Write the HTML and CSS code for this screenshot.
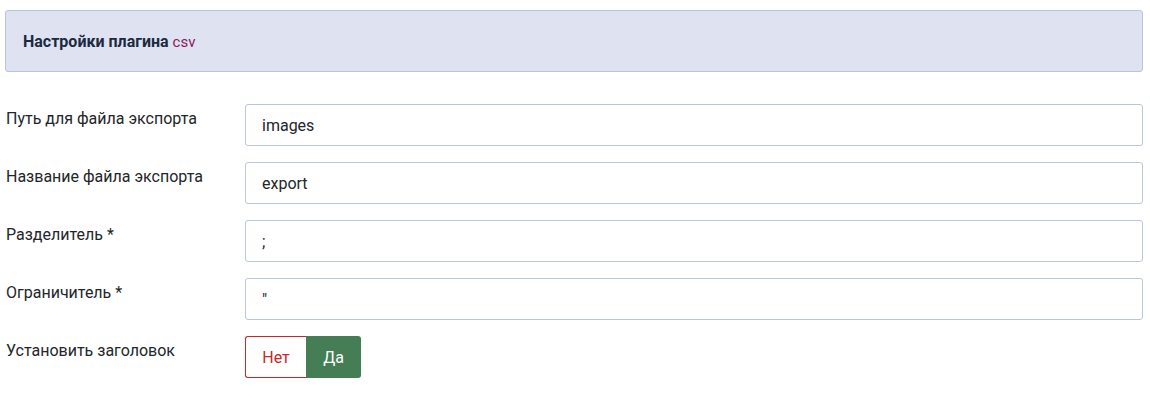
FILE: index.html
```html
<!DOCTYPE html>
<html lang="ru">
<head>
    <meta charset="UTF-8">
    <meta name="viewport" content="width=device-width, initial-scale=1.0">
    <title>Настройки плагина csv</title>
    <link rel="stylesheet" href="styles.css">
</head>
<body>
    <div class="settings">
        <div class="settings-head">
            <h3>Настройки плагина <code>csv</code></h3>
        </div>
        <form class="settings-form">
            <div class="control-group">
                <label>Путь для файла экспорта</label>
                <input type="text" value="images">
            </div>
            <div class="control-group">
                <label>Название файла экспорта</label>
                <input type="text" value="export">
            </div>
            <div class="control-group">
                <label>Разделитель *</label>
                <input type="text" value=";">
            </div>
            <div class="control-group">
                <label>Ограничитель *</label>
                <input type="text" value="&quot;">
            </div>
            <div class="control-group">
                <label>Установить заголовок</label>
                <div class="switcher">
                    <span class="sw-no">Нет</span>
                    <span class="sw-yes">Да</span>
                </div>
            </div>
        </form>
    </div>
</body>
</html>
```

FILE: styles.css
```css
body { margin: 0; font-family: Roboto, "Noto Sans", sans-serif; color: #22262a; background: #fff; }
.settings { padding: 10px 7px 0 5px; }
.settings-head { background: #dfe3f1; border: 1px solid #b7c4dc; border-radius: 3px; height: 60px; padding: 0 17px; display: flex; align-items: center; }
.settings-head h3 { margin: 0; font-size: 16px; font-weight: 700; color: #1c2a3e; }
.settings-head code { font-family: Roboto, sans-serif; font-weight: 400; font-size: 15px; color: #8b1a56; }
.settings-form { padding-top: 32px; }
.control-group { display: flex; align-items: flex-start; margin-bottom: 16px; }
.control-group label { width: 239px; padding: 5px 0 0 1px; font-size: 16px; line-height: 1.2; color: #22262a; }
.control-group input { flex: 1; height: 42px; box-sizing: border-box; border: 1px solid #b9c6dc; border-radius: 3px; padding: 0 16px; font-family: Roboto, sans-serif; font-size: 16px; color: #22262a; background: #fff; }
.switcher { display: flex; height: 42px; font-size: 16px; }
.switcher span { display: flex; align-items: center; justify-content: center; box-sizing: border-box; }
.sw-no { width: 61px; border: 1px solid #c52827; border-right: 0; border-radius: 3px 0 0 3px; color: #c52827; }
.sw-yes { width: 55px; background: #457d54; color: #fff; border-radius: 0 3px 3px 0; }
```
